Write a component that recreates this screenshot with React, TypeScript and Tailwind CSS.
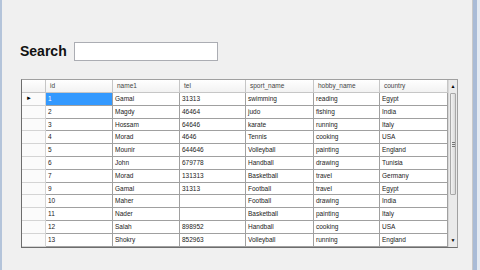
// Search form with a WinForms-style DataGridView of members.

type Member = {
    id: string;
    name1: string;
    tel: string;
    sport: string;
    hobby: string;
    country: string;
};

const members: Member[] = [
    { id: '1', name1: 'Gamal', tel: '31313', sport: 'swimming', hobby: 'reading', country: 'Egypt' },
    { id: '2', name1: 'Magdy', tel: '46464', sport: 'judo', hobby: 'fishing', country: 'India' },
    { id: '3', name1: 'Hossam', tel: '64646', sport: 'karate', hobby: 'running', country: 'Italy' },
    { id: '4', name1: 'Morad', tel: '4646', sport: 'Tennis', hobby: 'cooking', country: 'USA' },
    { id: '5', name1: 'Mounir', tel: '644646', sport: 'Volleyball', hobby: 'painting', country: 'England' },
    { id: '6', name1: 'John', tel: '679778', sport: 'Handball', hobby: 'drawing', country: 'Tunisia' },
    { id: '7', name1: 'Morad', tel: '131313', sport: 'Basketball', hobby: 'travel', country: 'Germany' },
    { id: '9', name1: 'Gamal', tel: '31313', sport: 'Football', hobby: 'travel', country: 'Egypt' },
    { id: '10', name1: 'Maher', tel: '', sport: 'Football', hobby: 'drawing', country: 'India' },
    { id: '11', name1: 'Nader', tel: '', sport: 'Basketball', hobby: 'painting', country: 'Italy' },
    { id: '12', name1: 'Salah', tel: '898952', sport: 'Handball', hobby: 'cooking', country: 'USA' },
    { id: '13', name1: 'Shokry', tel: '852963', sport: 'Volleyball', hobby: 'running', country: 'England' },
];

const headers = ['id', 'name1', 'tel', 'sport_name', 'hobby_name', 'country'];
const widths = ['w-[67px]', 'w-[67px]', 'w-[66px]', 'w-[68px]', 'w-[66px]', 'w-[68px]'];

function Scrollbar() {
    return (
        <div className="flex w-[10px] flex-col border-l border-[#d8d8d8] bg-[#eaeaea]">
            <div className="flex h-[13px] items-center justify-center text-[5px] text-black">▲</div>
            <div className="mx-[1px] flex h-[102px] items-center justify-center rounded-[1px] border border-[#a8a8a8] bg-gradient-to-r from-[#f2f2f2] to-[#d9d9d9]">
                <div className="flex flex-col gap-[1px]">
                    <div className="h-px w-[3px] bg-[#777]" />
                    <div className="h-px w-[3px] bg-[#777]" />
                    <div className="h-px w-[3px] bg-[#777]" />
                </div>
            </div>
            <div className="flex-1" />
            <div className="flex h-[12px] items-center justify-center text-[5px] text-black">▼</div>
        </div>
    );
}

function Grid() {
    return (
        <div className="flex w-[437px] border border-[#a0a0a0] border-b-[#6d6d6d] border-l-[#6d6d6d] bg-white text-[6.5px] text-[#222]">
            <div className="flex flex-1 flex-col">
                <div className="flex h-[13px] bg-gradient-to-b from-white to-[#f1f1f1] text-[#444]">
                    <div className="w-[24px] border-r border-b border-[#c6c6c6]" />
                    {headers.map((h, i) => (
                        <div
                            key={h}
                            className={`${widths[i]} flex items-center border-r border-b border-[#c6c6c6] pl-[4px]`}
                        >
                            {h}
                        </div>
                    ))}
                </div>
                {members.map((m, r) => {
                    const values = [m.id, m.name1, m.tel, m.sport, m.hobby, m.country];
                    return (
                        <div key={m.id} className="flex h-[12.8px]">
                            <div className="flex w-[24px] items-center border-r border-b border-[#d4d4d4] bg-[#fbfbfb] pl-[4px] text-[6px] text-black">
                                {r === 0 ? '►' : ''}
                            </div>
                            {values.map((v, i) => {
                                const selected = r === 0 && i === 0;
                                return (
                                    <div
                                        key={i}
                                        className={`${widths[i]} flex items-center border-r border-b border-[#a0a0a0] pl-[2px] ${
                                            selected ? 'bg-[#3399ff] text-white' : ''
                                        }`}
                                    >
                                        {v}
                                    </div>
                                );
                            })}
                        </div>
                    );
                })}
            </div>
            <Scrollbar />
        </div>
    );
}

export default function App() {
    return (
        <div
            className="flex h-[270px] w-[480px] overflow-hidden bg-[#f0f0f0]"
            style={{ fontFamily: '"Liberation Sans", Arial, sans-serif' }}
        >
            <div className="w-[2px] bg-[#b4c4da]" />
            <div className="flex flex-1 flex-col pl-[18px] pt-[41px]">
                <div className="flex items-center gap-[7px]">
                    <span className="text-[14px] font-bold text-[#111]">Search</span>
                    <input className="h-[19px] w-[144px] border border-[#abadb3] bg-white outline-none" />
                </div>
                <div className="mt-[17px] pl-px">
                    <Grid />
                </div>
            </div>
            <div className="w-px bg-[#c8c8c8]" />
            <div className="w-[4px] bg-[#a9bbd6]" />
            <div className="w-[3px] bg-[#e4eaf2]" />
        </div>
    );
}
